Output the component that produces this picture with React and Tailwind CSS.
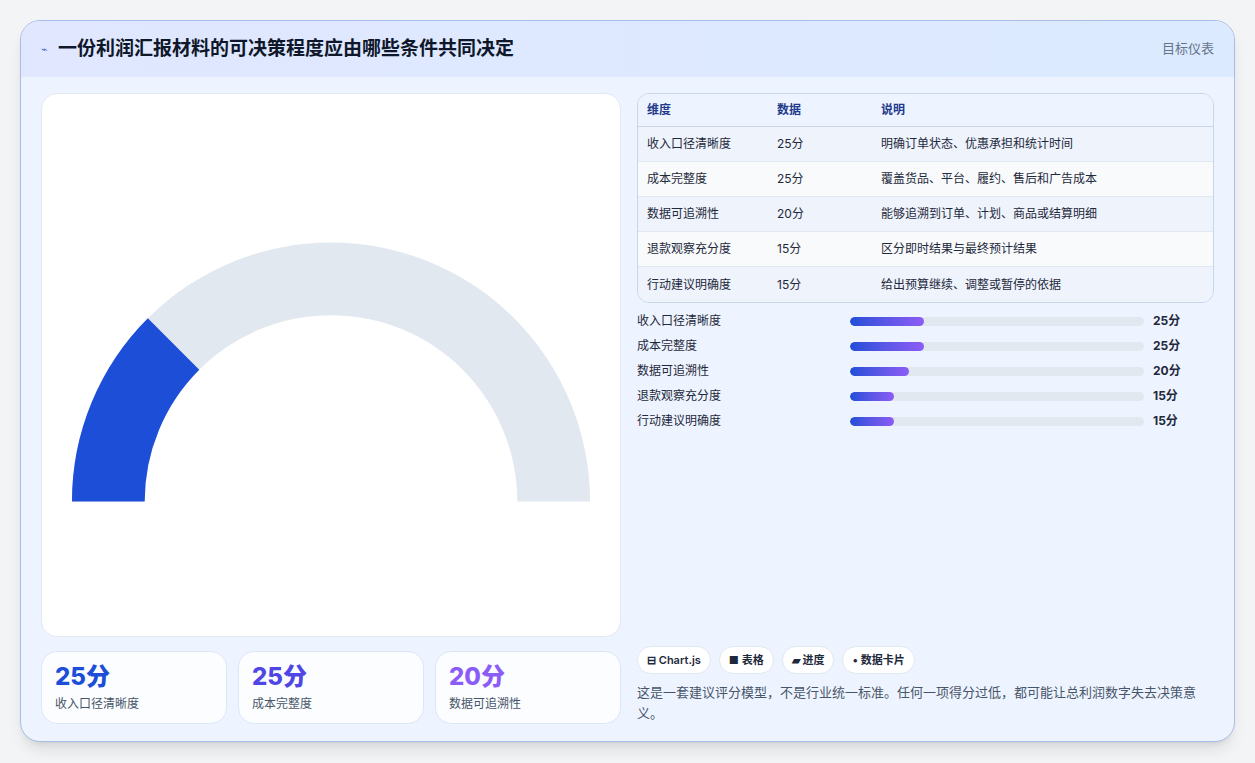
export default function App() {
  const rows = [
    ["收入口径清晰度", "25分", "明确订单状态、优惠承担和统计时间", 25],
    ["成本完整度", "25分", "覆盖货品、平台、履约、售后和广告成本", 25],
    ["数据可追溯性", "20分", "能够追溯到订单、计划、商品或结算明细", 20],
    ["退款观察充分度", "15分", "区分即时结果与最终预计结果", 15],
    ["行动建议明确度", "15分", "给出预算继续、调整或暂停的依据", 15],
  ];
  const cx = 290, cy = 409, R = 260, r = 187;
  const pt = (a, rad) => [cx + rad * Math.cos(a), cy - rad * Math.sin(a)];
  const arc = (a0, a1) => {
    const [x0, y0] = pt(a0, R), [x1, y1] = pt(a1, R), [x2, y2] = pt(a1, r), [x3, y3] = pt(a0, r);
    return `M${x0} ${y0} A${R} ${R} 0 0 1 ${x1} ${y1} L${x2} ${y2} A${r} ${r} 0 0 0 ${x3} ${y3} Z`;
  };
  return (
    <div className="w-[1255px] h-[763px] bg-[#f3f4f6] p-5 pb-0" style={{ fontFamily: 'Inter, "Noto Sans CJK SC", sans-serif' }}>
      <div className="h-[722px] rounded-[20px] border border-[#a9bde8] bg-[#eef4ff] overflow-hidden shadow-lg flex flex-col">
        <div className="h-[56px] shrink-0 flex items-center justify-between px-5 bg-gradient-to-r from-[#e0e7ff] to-[#dbeafe]">
          <div className="flex items-center gap-2.5">
            <span className="text-[#4f6bd8] text-[11px]">⌁</span>
            <span className="text-[19px] font-bold text-[#0f172a]">一份利润汇报材料的可决策程度应由哪些条件共同决定</span>
          </div>
          <span className="text-[13px] text-[#64748b]">目标仪表</span>
        </div>
        <div className="flex-1 flex gap-4 px-5 pt-4 pb-5">
          <div className="w-[580px] flex flex-col gap-[14px]">
            <div className="h-[544px] bg-white rounded-2xl border border-[#e2e8f0]">
              <svg viewBox="0 0 580 544" className="w-full h-full">
                <path d={arc(Math.PI, 0)} fill="#e2e8f0" />
                <path d={arc(Math.PI, Math.PI * 0.75)} fill="#1d4ed8" />
              </svg>
            </div>
            <div className="flex gap-[11px]">
              {[["25分", "text-[#1d4ed8]", "收入口径清晰度"], ["25分", "text-[#4f46e5]", "成本完整度"], ["20分", "text-[#8b5cf6]", "数据可追溯性"]].map(([v, c, l]) => (
                <div key={l} className="flex-1 h-[73px] rounded-2xl bg-[#fbfdff] border border-[#dbe6f7] px-[13px] pt-[9px]">
                  <div className={`text-[24px] font-extrabold leading-[32px] ${c}`}>{v}</div>
                  <div className="text-[12px] text-[#475569] mt-0.5">{l}</div>
                </div>
              ))}
            </div>
          </div>
          <div className="flex-1 flex flex-col">
            <div className="rounded-xl border border-[#c9d6ea] overflow-hidden text-[12px] text-[#1e293b]">
              <div className="h-[33px] flex items-center bg-[#eef4ff] border-b border-[#c9d6ea] font-semibold text-[#1e3a8a]">
                <div className="w-[139px] pl-[9px]">维度</div><div className="w-[104px]">数据</div><div>说明</div>
              </div>
              {rows.map((rw, i) => (
                <div key={i} className={`h-[35px] flex items-center ${i % 2 ? "bg-[#f8fafc]" : "bg-[#eef3fc]"} ${i < 4 ? "border-b border-[#e2e8f0]" : ""}`}>
                  <div className="w-[139px] pl-[9px]">{rw[0]}</div><div className="w-[104px]">{rw[1]}</div><div>{rw[2]}</div>
                </div>
              ))}
            </div>
            <div className="mt-[9px] flex flex-col gap-[7px] pr-[22px] text-[12px] text-[#1e293b]">
              {rows.map((rw, i) => (
                <div key={i} className="h-[18px] flex items-center">
                  <div className="w-[213px]">{rw[0]}</div>
                  <div className="w-[294px] h-[9px] rounded-full bg-[#e2e8f0] overflow-hidden">
                    <div className="h-full rounded-full bg-gradient-to-r from-[#1d4ed8] to-[#8b5cf6]" style={{ width: rw[3] + "%" }} />
                  </div>
                  <div className="ml-[9px] font-bold">{rw[1]}</div>
                </div>
              ))}
            </div>
            <div className="flex-1" />
            <div className="flex gap-2 text-[11px] font-semibold text-[#1e293b]">
              {["⊟ Chart.js", "■ 表格", "▰ 进度", "• 数据卡片"].map(t => (
                <span key={t} className="h-[28px] px-[9px] flex items-center rounded-full bg-white border border-[#e2e8f0]">{t}</span>
              ))}
            </div>
            <p className="mt-[8px] text-[13px] leading-[21px] text-[#475569]">这是一套建议评分模型，不是行业统一标准。任何一项得分过低，都可能让总利润数字失去决策意义。</p>
          </div>
        </div>
      </div>
    </div>
  );
}
